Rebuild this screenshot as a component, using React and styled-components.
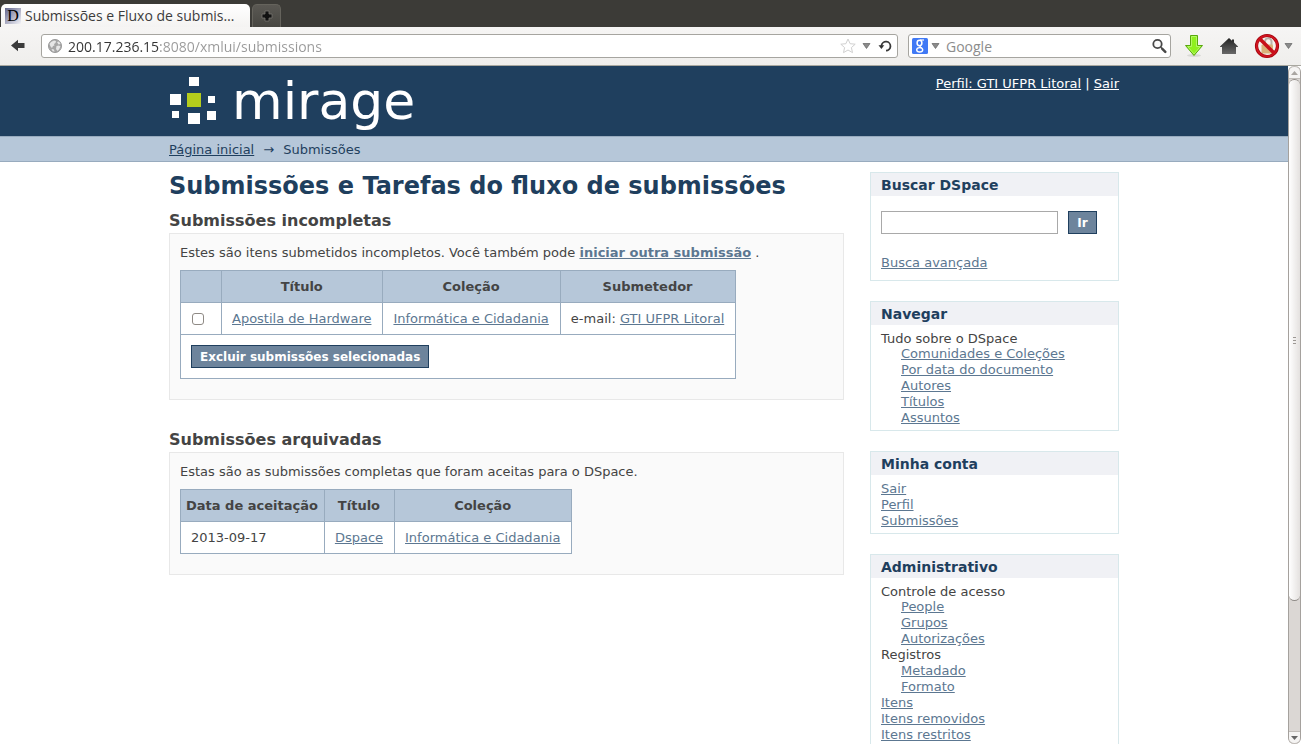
import styled, { createGlobalStyle } from 'styled-components';

const incomplete = [{ title: 'Apostila de Hardware', collection: 'Informática e Cidadania', submitter: 'GTI UFPR Litoral' }];

const archived = [{ date: '2013-09-17', title: 'Dspace', collection: 'Informática e Cidadania' }];

const browse = [
  { label: 'Tudo sobre o DSpace' },
  { link: 'Comunidades e Coleções', nested: true },
  { link: 'Por data do documento', nested: true },
  { link: 'Autores', nested: true },
  { link: 'Títulos', nested: true },
  { link: 'Assuntos', nested: true },
];

const account = [{ link: 'Sair' }, { link: 'Perfil' }, { link: 'Submissões' }];

const admin = [
  { label: 'Controle de acesso' },
  { link: 'People', nested: true },
  { link: 'Grupos', nested: true },
  { link: 'Autorizações', nested: true },
  { label: 'Registros' },
  { link: 'Metadado', nested: true },
  { link: 'Formato', nested: true },
  { link: 'Itens' },
  { link: 'Itens removidos' },
  { link: 'Itens restritos' },
];

export default function App() {
  return (
    <Window>
      <GlobalStyle />
      <TabBar>
        <Tab>
          <Favicon />
          <span>Submissões e Fluxo de submis…</span>
        </Tab>
        <NewTab aria-label="Nova aba">
          <PlusIcon />
        </NewTab>
      </TabBar>
      <Toolbar>
        <IconButton aria-label="Voltar" $width={20}>
          <BackIcon />
        </IconButton>
        <AddressBar>
          <GlobeIcon />
          <AddressInput aria-label="Endereço" defaultValue="200.17.236.15:8080/xmlui/submissions" />
          <IconButton aria-label="Favoritar" $width={16}>
            <StarIcon />
          </IconButton>
          <IconButton aria-label="Histórico" $width={9}>
            <CaretIcon />
          </IconButton>
          <IconButton aria-label="Recarregar" $width={16}>
            <ReloadIcon />
          </IconButton>
        </AddressBar>
        <SearchBar>
          <EngineIcon />
          <IconButton aria-label="Mecanismo de busca" $width={9}>
            <CaretIcon />
          </IconButton>
          <SearchInput aria-label="Pesquisar na web" placeholder="Google" />
          <IconButton aria-label="Pesquisar" $width={16}>
            <MagnifierIcon />
          </IconButton>
        </SearchBar>
        <ToolbarButtons>
          <IconButton aria-label="Downloads" $width={20}>
            <DownloadIcon />
          </IconButton>
          <IconButton aria-label="Página inicial" $width={18}>
            <HomeIcon />
          </IconButton>
          <AddonButtons>
            <IconButton aria-label="Bloqueio" $width={26}>
              <BlockIcon />
            </IconButton>
            <IconButton aria-label="Opções" $width={9}>
              <CaretIcon />
            </IconButton>
          </AddonButtons>
        </ToolbarButtons>
      </Toolbar>
      <Viewport>
        <Page>
          <Header>
            <HeaderInner>
              <Logo href="#">
                <LogoMark />
                <span>mirage</span>
              </Logo>
              <UserBox>
                <a href="#">Perfil: GTI UFPR Litoral</a> | <a href="#">Sair</a>
              </UserBox>
            </HeaderInner>
          </Header>
          <Trail>
            <TrailInner>
              <a href="#">Página inicial</a>
              <span>→</span>
              <span>Submissões</span>
            </TrailInner>
          </Trail>
          <Content>
            <Main>
              <Title>Submissões e Tarefas do fluxo de submissões</Title>
              <Section>
                <Subtitle>Submissões incompletas</Subtitle>
                <Box>
                  <p>
                    Estes são itens submetidos incompletos. Você também pode{' '}
                    <Link href="#" $bold>
                      iniciar outra submissão
                    </Link>{' '}
                    .
                  </p>
                  <Table>
                    <thead>
                      <tr>
                        <CheckHead />
                        <th>Título</th>
                        <th>Coleção</th>
                        <th>Submetedor</th>
                      </tr>
                    </thead>
                    <tbody>
                      {incomplete.map(item => (
                        <tr key={item.title}>
                          <td>
                            <Checkbox type="checkbox" aria-label={item.title} />
                          </td>
                          <td>
                            <Link href="#">{item.title}</Link>
                          </td>
                          <td>
                            <Link href="#">{item.collection}</Link>
                          </td>
                          <td>
                            e-mail: <Link href="#">{item.submitter}</Link>
                          </td>
                        </tr>
                      ))}
                      <tr>
                        <ActionCell colSpan={4}>
                          <Button>Excluir submissões selecionadas</Button>
                        </ActionCell>
                      </tr>
                    </tbody>
                  </Table>
                </Box>
              </Section>
              <Section>
                <Subtitle>Submissões arquivadas</Subtitle>
                <Box>
                  <p>Estas são as submissões completas que foram aceitas para o DSpace.</p>
                  <Table>
                    <thead>
                      <tr>
                        <th>Data de aceitação</th>
                        <th>Título</th>
                        <th>Coleção</th>
                      </tr>
                    </thead>
                    <tbody>
                      {archived.map(item => (
                        <tr key={item.title}>
                          <td>{item.date}</td>
                          <td>
                            <Link href="#">{item.title}</Link>
                          </td>
                          <td>
                            <Link href="#">{item.collection}</Link>
                          </td>
                        </tr>
                      ))}
                    </tbody>
                  </Table>
                </Box>
              </Section>
            </Main>
            <Sidebar>
              <Panel>
                <PanelTitle>Buscar DSpace</PanelTitle>
                <SearchForm onSubmit={event => event.preventDefault()}>
                  <SearchRow>
                    <TextInput type="text" aria-label="Buscar DSpace" />
                    <Button>Ir</Button>
                  </SearchRow>
                  <Link href="#">Busca avançada</Link>
                </SearchForm>
              </Panel>
              <Menu title="Navegar" items={browse} />
              <Menu title="Minha conta" items={account} />
              <Menu title="Administrativo" items={admin} />
            </Sidebar>
          </Content>
        </Page>
        <Scrollbar>
          <ScrollArrow $dir="up">
            <SmallArrow />
          </ScrollArrow>
          <Thumb>
            <Grip />
          </Thumb>
          <ScrollArrow $dir="down">
            <SmallArrow />
          </ScrollArrow>
        </Scrollbar>
      </Viewport>
    </Window>
  );
}

function Menu({ title, items }) {
  return (
    <Panel>
      <PanelTitle>{title}</PanelTitle>
      <MenuList>
        {items.map(item =>
          item.label ? (
            <MenuLabel key={item.label}>{item.label}</MenuLabel>
          ) : (
            <MenuItem key={item.link} $nested={item.nested}>
              <Link href="#">{item.link}</Link>
            </MenuItem>
          )
        )}
      </MenuList>
    </Panel>
  );
}

function Favicon() {
  return (
    <svg width="16" height="16" viewBox="0 0 16 16">
      <defs>
        <linearGradient id="fav" x1="0" y1="0" x2="1" y2="1">
          <stop offset="0" stopColor="#62658c" />
          <stop offset="1" stopColor="#f4f4f8" />
        </linearGradient>
      </defs>
      <rect width="16" height="16" fill="url(#fav)" />
      <text x="8" y="13" textAnchor="middle" fontFamily="Liberation Serif, serif" fontSize="16" fill="#000">
        D
      </text>
    </svg>
  );
}

function PlusIcon() {
  return (
    <svg width="12" height="12" viewBox="0 0 12 12">
      <path d="M4 1h4v3h3v4H8v3H4V8H1V4h3z" fill="#111" stroke="#77756f" strokeWidth="0.8" />
    </svg>
  );
}

function BackIcon() {
  return (
    <svg width="16" height="14" viewBox="0 0 16 14">
      <path d="M1 6.500 8 .8V4h6.500v5H8v3.200z" fill="#3b3b3b" />
    </svg>
  );
}

function GlobeIcon() {
  return (
    <svg width="14" height="14" viewBox="0 0 14 14">
      <circle cx="7" cy="7" r="6.500" fill="#a6a6a6" stroke="#999" />
      <path d="M1.500 5 3 3l3-1.500 2 .5-.5 2L6 5l.5 1.500L5 7 4 9 2.500 7.500z" fill="#e6e6e6" />
      <path d="M9 3l2-.5L12.500 5l-2 .5zM8.500 7l2.500-.5 1.500 1L11 10.500 9.500 12 8 10zM3.500 10l2.500.5.5 2.200-2-.7z" fill="#e6e6e6" />
    </svg>
  );
}

function StarIcon() {
  return (
    <svg width="16" height="16" viewBox="0 0 16 16">
      <path
        d="M8 1l2.100 4.700 5.100.5-3.800 3.400 1.100 5L8 12l-4.500 2.600 1.100-5L.8 6.200l5.100-.5z"
        fill="#fff"
        stroke="#d0d0d0"
        strokeLinejoin="round"
      />
    </svg>
  );
}

function CaretIcon() {
  return (
    <svg width="9" height="6" viewBox="0 0 9 6">
      <path d="M1 .5h7L4.500 5.500z" fill="#8b8b8b" stroke="#6f6f6f" strokeWidth="0.8" />
    </svg>
  );
}

function ReloadIcon() {
  return (
    <svg width="14" height="14" viewBox="0 0 14 14">
      <path d="M3.500 7.500V6.500a4.500 4.500 0 1 1 4.500 5.200" fill="none" stroke="#3a3a3a" strokeWidth="1.800" />
      <path d="M.5 6.300h5.800L3.400 10z" fill="#333" />
    </svg>
  );
}

function EngineIcon() {
  return (
    <svg width="16" height="16" viewBox="0 0 16 16">
      <rect width="16" height="16" rx="1.500" fill="#4079f5" />
      <g fill="none" stroke="#fff">
        <ellipse cx="7.500" cy="5" rx="2.400" ry="2.700" strokeWidth="1.500" />
        <path d="M8 2h4" strokeWidth="1.200" />
        <path d="M8.500 7.800c-1.200 1 .2 1.400 1.200 2.200" strokeWidth="1.300" />
        <ellipse cx="7.700" cy="11.800" rx="3" ry="2.200" strokeWidth="1.400" />
      </g>
    </svg>
  );
}

function MagnifierIcon() {
  return (
    <svg width="16" height="16" viewBox="0 0 16 16">
      <circle cx="6.500" cy="6" r="4.200" fill="#fafafa" stroke="#484848" strokeWidth="1.800" />
      <path d="M9.800 9.300l1.500 1.500" stroke="#484848" strokeWidth="1.500" />
      <path d="M11.300 10.800l3 3" stroke="#484848" strokeWidth="2.500" strokeLinecap="round" />
    </svg>
  );
}

function DownloadIcon() {
  return (
    <svg width="20" height="24" viewBox="0 0 20 24">
      <ellipse cx="10" cy="21.500" rx="7" ry="1.500" fill="#d9d9d6" />
      <path d="M6.500 1.500h7v10h5L10 21.500l-8.500-10h5z" fill="#8ff01e" stroke="#58a80d" strokeLinejoin="round" />
      <path d="M7.500 12.500v-10h5v10h3.800L10 20l-6.300-7.500z" fill="none" stroke="#b4f766" />
    </svg>
  );
}

function HomeIcon() {
  return (
    <svg width="18" height="16" viewBox="0 0 18 16">
      <defs>
        <linearGradient id="home" x1="0" y1="0" x2="0" y2="1">
          <stop offset="0" stopColor="#222" />
          <stop offset="1" stopColor="#686868" />
        </linearGradient>
      </defs>
      <path d="M9 0l3 2.800V1.500h2v3L18 8.500v.5h-2v7H2V9H0v-.5z" fill="url(#home)" />
    </svg>
  );
}

function BlockIcon() {
  return (
    <svg width="26" height="26" viewBox="0 0 26 26">
      <circle cx="13" cy="13" r="10" fill="#f6f2ee" />
      <path d="M11 12V8.500a3 3 0 0 1 6.500 0V12" fill="none" stroke="#b9b3aa" strokeWidth="2" />
      <rect x="7.500" y="11.500" width="11.500" height="9" rx="1" fill="#d9b27a" />
      <circle cx="13" cy="13" r="10.500" fill="none" stroke="#a5040c" strokeWidth="3.200" />
      <circle cx="13" cy="13" r="10.300" fill="none" stroke="#cf1420" strokeWidth="1.800" />
      <path d="M5.700 5.700l14.600 14.600" stroke="#c8101a" strokeWidth="3.600" />
    </svg>
  );
}

function LogoMark() {
  return (
    <svg width="48" height="48" viewBox="0 0 48 48">
      <g fill="#fff">
        <rect x="20" y="0" width="10" height="9" />
        <rect x="1" y="17" width="11" height="11" />
        <rect x="39" y="19" width="7" height="7" />
        <rect x="3" y="34" width="7" height="7" />
        <rect x="19" y="36" width="12" height="11" />
        <rect x="38" y="34" width="9" height="9" />
      </g>
      <rect x="18" y="16" width="14" height="14" fill="#b5cc1c" />
    </svg>
  );
}

function SmallArrow() {
  return (
    <svg width="7" height="4" viewBox="0 0 7 4">
      <path d="M0 0h7L3.500 4z" fill="currentColor" />
    </svg>
  );
}

function Grip() {
  return (
    <svg width="3" height="9" viewBox="0 0 3 9">
      <path d="M0 1.500h3M0 4.500h3M0 7.500h3" stroke="#9c9894" />
    </svg>
  );
}

const GlobalStyle = createGlobalStyle`
  * {
    box-sizing: border-box;
  }

  body {
    margin: 0;
    font-family: 'DejaVu Sans', sans-serif;
    font-size: 13px;
    line-height: 16px;
    color: #444;
  }

  h1, h2, h3, p, ul {
    margin: 0;
    padding: 0;
  }

  button, input {
    font-family: inherit;
  }
`;

const Window = styled.div`
  height: 100vh;
  display: flex;
  flex-direction: column;
  overflow: hidden;
`;

const TabBar = styled.div`
  height: 27px;
  flex: none;
  display: flex;
  align-items: flex-end;
  gap: 2px;
  padding: 0 1px;
  background: #3c3b37;
`;

const Tab = styled.div`
  width: 249px;
  height: 23px;
  display: flex;
  align-items: center;
  gap: 4px;
  padding: 0 4px;
  border-radius: 5px 5px 0 0;
  background: linear-gradient(#fff, #f4f3f2);
  font: 14px/20px 'Open Sans', sans-serif;
  color: #3c3c3c;
  white-space: nowrap;

  svg {
    flex: none;
  }
`;

const NewTab = styled.button`
  width: 29px;
  height: 23px;
  display: flex;
  align-items: center;
  justify-content: center;
  padding: 0;
  border: 1px solid #65635c;
  border-bottom: 0;
  border-radius: 5px 5px 0 0;
  background: linear-gradient(#5a5853, #474641);
`;

const Toolbar = styled.div`
  height: 39px;
  flex: none;
  display: flex;
  align-items: center;
  gap: 10px;
  padding: 0 8px;
  border-bottom: 1px solid #a9a8a0;
  background: linear-gradient(#f6f5f4, #efeeec);
`;

const IconButton = styled.button`
  width: ${({ $width }) => $width}px;
  flex: none;
  display: flex;
  align-items: center;
  justify-content: center;
  padding: 0;
  border: 0;
  background: none;
`;

const Field = styled.div`
  height: 24px;
  display: flex;
  align-items: center;
  border: 1px solid #a6a5a0;
  border-radius: 3px;
  background: #fff;

  input {
    min-width: 0;
    flex: 1;
    padding: 1px 0 0;
    border: 0;
    outline: 0;
    font: 14px/20px 'Open Sans', sans-serif;
  }
`;

const AddressBar = styled(Field)`
  flex: 1;
  gap: 6px;
  margin-left: 3px;
  padding: 0 4px 0 6px;
`;

/* the host is darker than the rest of the address */
const AddressInput = styled.input`
  background: linear-gradient(to right, #333 92px, #999 92px);
  background-clip: text;
  color: transparent;
`;

const SearchBar = styled(Field)`
  width: 263px;
  gap: 3px;
  padding: 0 3px;
`;

const SearchInput = styled.input`
  margin-left: 3px;

  &::placeholder {
    color: #8c8c8c;
  }
`;

const ToolbarButtons = styled.div`
  display: flex;
  align-items: center;
  gap: 16px;
  margin-left: 3px;
`;

const AddonButtons = styled.div`
  display: flex;
  align-items: center;
  gap: 4px;
`;

const Viewport = styled.div`
  flex: 1;
  min-height: 0;
  display: flex;
`;

const Page = styled.div`
  flex: 1;
  overflow: hidden;
  background: #fff;
`;

const Wrapper = styled.div`
  max-width: 950px;
  margin: 0 auto;
  display: flex;
`;

const Header = styled.header`
  background: #1f3f5e;
`;

const HeaderInner = styled(Wrapper)`
  height: 70px;
  justify-content: space-between;
`;

const Logo = styled.a`
  display: flex;
  align-items: center;
  gap: 15px;
  font-size: 52px;
  line-height: 70px;
  color: #fff;
  text-decoration: none;
`;

const UserBox = styled.div`
  padding-top: 10px;
  color: #fff;

  a {
    color: #fff;
  }
`;

const Trail = styled.nav`
  border: solid #98abbe;
  border-width: 1px 0;
  background: #b6c7d9;
  color: #1f3f5e;

  a {
    color: #1f3f5e;
  }
`;

const TrailInner = styled(Wrapper)`
  gap: 9px;
  padding: 5px 0 3px;
`;

const Content = styled(Wrapper)`
  align-items: flex-start;
  gap: 26px;
  padding-top: 10px;
`;

const Main = styled.main`
  flex: 1;
`;

const Title = styled.h1`
  margin-bottom: 10px;
  font-size: 24px;
  line-height: 28px;
  color: #1f3f5e;
`;

const Section = styled.section`
  margin-bottom: 29px;
`;

const Subtitle = styled.h2`
  margin-bottom: 1px;
  font-size: 16px;
  line-height: 22px;
`;

const Box = styled.div`
  padding: 10px 10px 20px;
  border: 1px solid #e8e8e8;
  background: #fafafa;

  p {
    margin-bottom: 8px;
    line-height: 18px;
  }
`;

const Table = styled.table`
  border-collapse: collapse;
  background: #fff;
  line-height: 15px;

  th,
  td {
    border: 1px solid #98abbe;
  }

  th {
    padding: 8px 6px 8px 5px;
    background: #b6c7d9;
  }

  td {
    padding: 8px 11px 8px 10px;
  }
`;

const CheckHead = styled.td`
  width: 41px;

  && {
    background: #b6c7d9;
  }
`;

const ActionCell = styled.td`
  && {
    padding: 10px;
  }
`;

const Checkbox = styled.input`
  display: block;
  width: 12px;
  height: 12px;
  margin: 0 1px;
  appearance: none;
  border: 1px solid #8f8a85;
  border-radius: 3px;
  background: #fff;

  &:checked {
    background: #6d849c;
  }
`;

const Link = styled.a`
  color: #5c7791;
  font-weight: ${({ $bold }) => ($bold ? 'bold' : 'normal')};
`;

const Button = styled.button`
  min-width: 29px;
  height: 23px;
  display: block;
  padding: 0 8px;
  border: 1px solid #1f3f5e;
  background: #6d849c;
  color: #fff;
  font-size: 12px;
  font-weight: bold;
`;

const Sidebar = styled.aside`
  width: 249px;
  display: flex;
  flex-direction: column;
  gap: 20px;
`;

const Panel = styled.section`
  border: 1px solid #d8e8eb;
`;

const PanelTitle = styled.h3`
  padding: 1px 10px 0;
  background: #f0f1f5;
  font-size: 14px;
  line-height: 22px;
  color: #1f3f5e;
`;

const SearchForm = styled.form`
  padding: 15px 10px 9px;
`;

const SearchRow = styled.div`
  display: flex;
  gap: 10px;
  margin-bottom: 21px;
`;

const TextInput = styled.input`
  width: 177px;
  height: 23px;
  border: 1px solid #a9a9a9;
`;

const MenuList = styled.ul`
  padding: 6px 10px 4px;
  list-style: none;
`;

const MenuLabel = styled.li`
  &:first-child {
    line-height: 15px;
  }
`;

const MenuItem = styled.li`
  padding-left: ${({ $nested }) => ($nested ? '20px' : '0')};
`;

const Scrollbar = styled.div`
  width: 13px;
  flex: none;
  display: flex;
  flex-direction: column;
  border: solid #a5a19d;
  border-width: 0 1px;
  border-radius: 6px;
  background: #dbd7d4;
`;

const ScrollArrow = styled.div`
  height: 13px;
  flex: none;
  display: flex;
  align-items: center;
  justify-content: center;
  border: 1px solid #c0bcb8;
  border-width: 1px 0;
  border-radius: ${({ $dir }) => ($dir === 'up' ? '6px 6px 0 0' : '0 0 6px 6px')};
  background: #f5f4f3;
  color: ${({ $dir }) => ($dir === 'up' ? '#aaa6a2' : '#666')};
  margin-top: ${({ $dir }) => ($dir === 'up' ? '0' : 'auto')};

  svg {
    transform: ${({ $dir }) => ($dir === 'up' ? 'rotate(180deg)' : 'none')};
  }
`;

const Thumb = styled.div`
  height: 77%;
  min-height: 0;
  display: flex;
  align-items: center;
  justify-content: center;
  border: solid #8f8b87;
  border-width: 1px 0;
  border-radius: 6px;
  background: linear-gradient(to right, #fff, #e4e1df);
`;
